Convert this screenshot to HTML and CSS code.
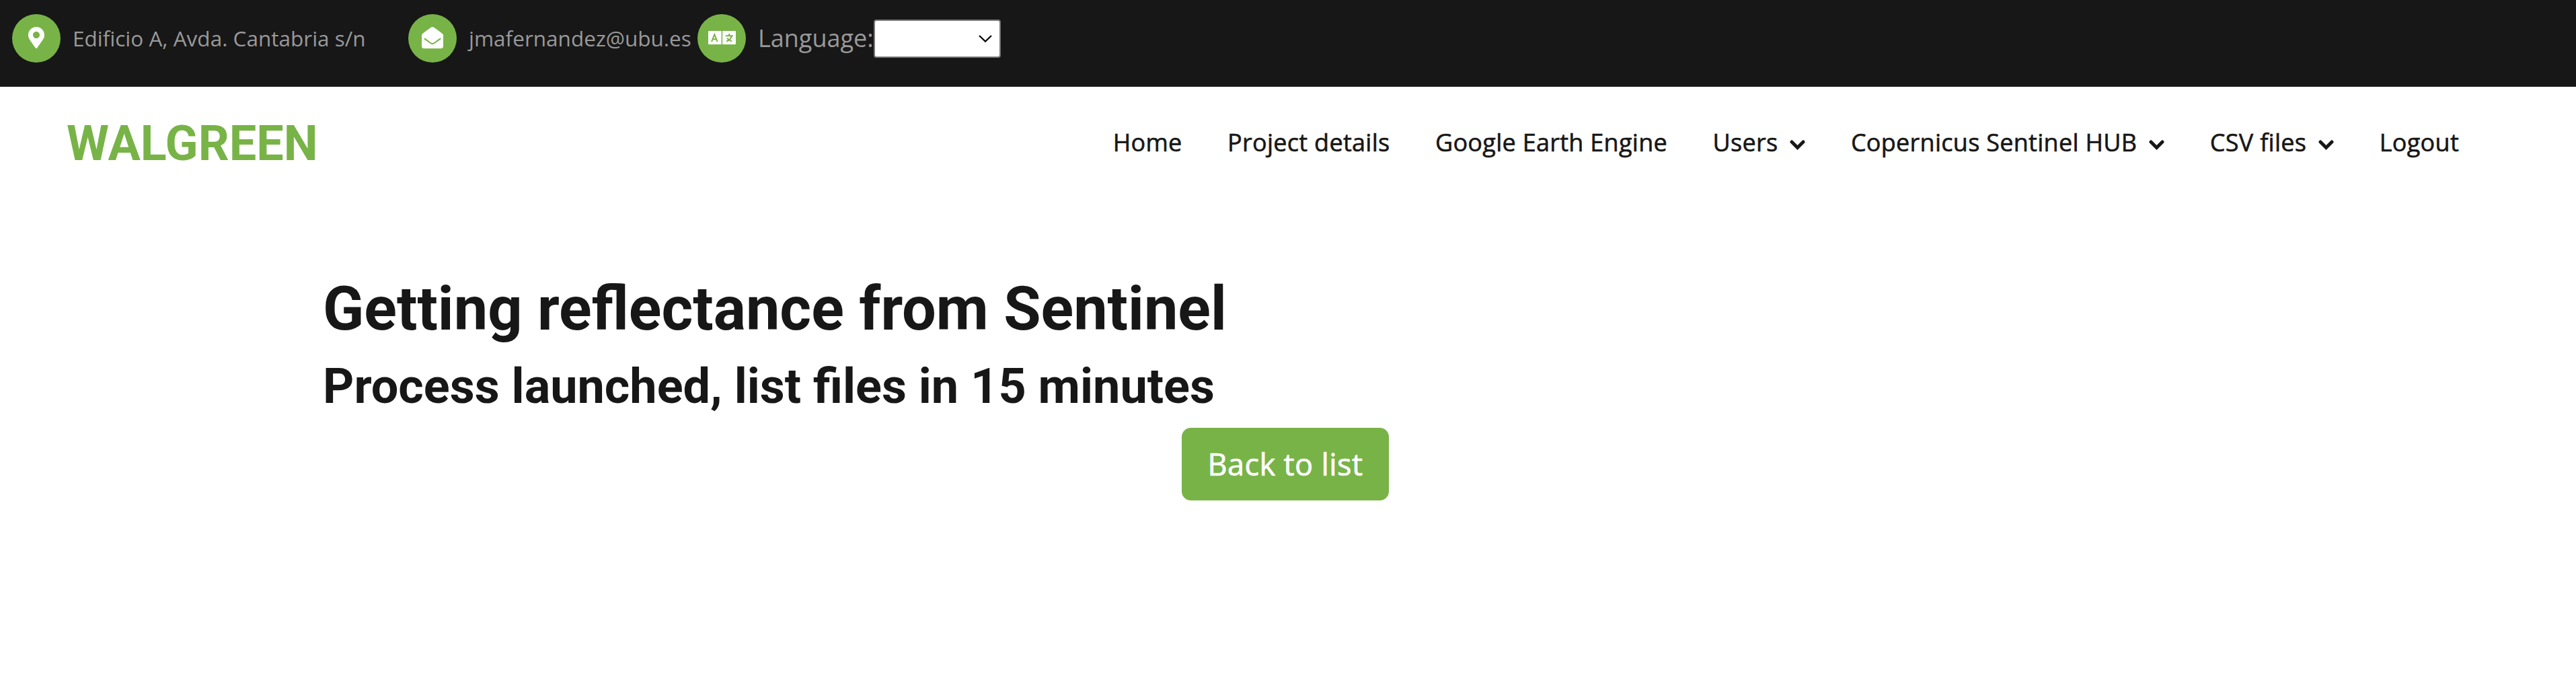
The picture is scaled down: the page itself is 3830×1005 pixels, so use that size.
FILE: index.html
```html
<!DOCTYPE html>
<html lang="en">
<head>
<meta charset="utf-8">
<title>WALGREEN</title>
<link rel="stylesheet" href="styles.css">
</head>
<body>
<div class="topbar">
  <div class="contact contact-address">
    <span class="badge"><svg class="icon-pin" viewBox="0 0 384 512"><path d="M172.268 501.67C26.97 291.031 0 269.413 0 192 0 85.961 85.961 0 192 0s192 85.961 192 192c0 77.413-26.97 99.031-172.268 309.67-9.535 13.774-29.93 13.773-39.464 0zM192 272c44.183 0 80-35.817 80-80s-35.817-80-80-80-80 35.817-80 80 35.817 80 80 80z"/></svg></span>
    <span class="contact-text">Edificio A, Avda. Cantabria s/n</span>
  </div>
  <div class="contact contact-mail">
    <span class="badge"><svg class="icon-mail" viewBox="0 0 512 512"><path d="M512 464c0 26.51-21.49 48-48 48H48c-26.51 0-48-21.49-48-48V200.724a48 48 0 0 1 18.387-37.776c24.913-19.529 45.501-35.365 164.2-121.511C199.412 29.17 232.797-.347 256 .003c23.198-.354 56.596 29.172 73.413 41.433 118.687 86.137 139.303 101.995 164.2 121.512A48 48 0 0 1 512 200.724V464zm-65.666-196.605c-2.563-3.728-7.7-4.595-11.339-1.907-22.845 16.873-55.462 40.705-105.582 77.079-16.825 12.266-50.21 41.781-73.413 41.43-23.211.344-56.559-29.143-73.413-41.43-50.114-36.37-82.734-60.204-105.582-77.079-3.639-2.688-8.776-1.821-11.339 1.907l-9.072 13.196a7.998 7.998 0 0 0 1.839 10.967c22.887 16.899 55.454 40.69 105.303 76.868 20.274 14.781 56.524 47.813 92.264 47.573 35.724.242 71.961-32.771 92.263-47.573 49.85-36.179 82.418-59.97 105.303-76.868a7.998 7.998 0 0 0 1.839-10.967l-9.071-13.196z"/></svg></span>
    <span class="contact-text">jmafernandez@ubu.es</span>
  </div>
  <div class="contact">
    <span class="badge"><svg class="icon-lang" viewBox="0 0 41 20"><path fill="#fff" d="M1 0H19.6V20H1Q0 20 0 19V1Q0 0 1 0zM21.2 0H40Q41 0 41 1V19Q41 20 40 20H21.2z"/><path class="mark" d="M5 16L9.3 5.2L13.6 16M6.6 12.2H12M25.7 7.3H36.8M31.2 4V7M34.6 8C33.8 11.5 31 14 27 15.7M28 10.5C29.5 12.7 32 14.6 35.2 15.6"/></svg></span>
    <label class="language" for="language">Language:</label>
    <div class="select-wrap">
      <select id="language" class="language-select"><option></option></select>
      <svg class="select-arrow" viewBox="0 0 20 11"><path d="M1 1l9 8.6L19 1"/></svg>
    </div>
  </div>
</div>
<header class="navbar">
  <a class="brand">WALGREEN</a>
  <nav class="menu">
    <a>Home</a>
    <a>Project details</a>
    <a>Google Earth Engine</a>
    <a>Users<svg class="caret" viewBox="0 0 23 15"><path d="M3 3l8.5 8.5L20 3"/></svg></a>
    <a>Copernicus Sentinel HUB<svg class="caret" viewBox="0 0 23 15"><path d="M3 3l8.5 8.5L20 3"/></svg></a>
    <a>CSV files<svg class="caret" viewBox="0 0 23 15"><path d="M3 3l8.5 8.5L20 3"/></svg></a>
    <a>Logout</a>
  </nav>
</header>
<main class="content">
  <h1>Getting reflectance from Sentinel</h1>
  <h2>Process launched, list files in 15 minutes</h2>
  <div class="actions"><a class="button">Back to list</a></div>
</main>
</body>
</html>
```
FILE: styles.css
```css
* { box-sizing: border-box; }
body {
  margin: 0;
  background: #fff;
  color: #171717;
  font-family: "Open Sans", sans-serif;
  font-size: 36px;
  line-height: 54px;
}
.topbar {
  display: flex;
  height: 129px;
  padding: 21px 18px 0;
  background: #171717;
  color: #999;
}
.contact { display: flex; align-items: center; height: 72px; white-space: nowrap; }
.contact-address { width: 589px; }
.contact-mail { width: 430px; }
.badge {
  display: flex;
  flex: none;
  align-items: center;
  justify-content: center;
  width: 72px;
  height: 72px;
  margin-right: 18px;
  border-radius: 50%;
  background: #78b347;
}
.badge svg { display: block; fill: #fff; margin-bottom: 2px; }
.icon-pin { width: 24px; height: 32px; }
.icon-mail { width: 32px; height: 32px; }
.icon-lang { width: 41px; height: 20px; }
.icon-lang .mark { fill: none; stroke: #78b347; stroke-width: 2; }
.contact-text { font-size: 31.5px; }
.select-wrap { position: relative; width: 189px; height: 57px; margin-top: 1px; }
.language-select {
  display: block;
  width: 100%;
  height: 100%;
  appearance: none;
  background: #fff;
  border: 2px solid #767676;
  border-radius: 4px;
}
.select-arrow {
  position: absolute;
  right: 13px;
  top: 23px;
  width: 20px;
  height: 11px;
  fill: none;
  stroke: #000;
  stroke-width: 2.2;
  pointer-events: none;
}
.navbar {
  display: flex;
  align-items: center;
  justify-content: space-between;
  height: 169px;
  padding: 0 174px 0 99px;
}
.brand { font: 700 72px/86px Roboto, sans-serif; color: #78b347; }
.menu {
  display: flex;
  gap: 67.5px;
  padding-bottom: 3px;
  letter-spacing: 0.28px;
  -webkit-text-stroke: 0.6px currentColor;
  white-space: nowrap;
}
.caret {
  width: 23px;
  height: 15px;
  margin-left: 18px;
  vertical-align: 2px;
  fill: none;
  stroke: #171717;
  stroke-width: 5;
  stroke-linecap: round;
}
.content { padding: 108px 480px 0; }
h1, h2 { margin: 0 0 18px; font-family: Roboto, sans-serif; font-weight: 700; }
h1 { font-size: 90px; line-height: 108px; }
h2 { font-size: 72px; line-height: 86px; }
.actions { display: flex; justify-content: center; padding-right: 8px; }
.button {
  width: 308px;
  height: 108px;
  border-radius: 13.5px;
  background: #78b347;
  color: #fff;
  font-size: 45px;
  letter-spacing: 0.4px;
  -webkit-text-stroke: 0.7px currentColor;
  line-height: 108px;
  text-align: center;
}
```
